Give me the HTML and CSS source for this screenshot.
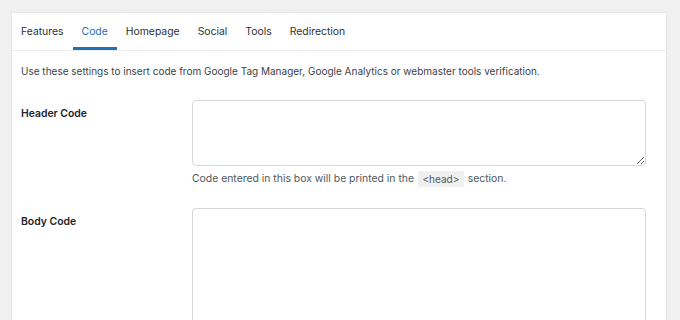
FILE: index.html
```html
<!DOCTYPE html>
<html>
<head>
<meta charset="utf-8">
<link rel="stylesheet" href="styles.css">
</head>
<body>
<div class="card">
  <nav class="tabs">
    <a class="tab">Features</a>
    <a class="tab active">Code</a>
    <a class="tab">Homepage</a>
    <a class="tab">Social</a>
    <a class="tab">Tools</a>
    <a class="tab">Redirection</a>
  </nav>
  <div class="content">
    <p class="intro">Use these settings to insert code from Google Tag Manager, Google Analytics or webmaster tools verification.</p>
    <div class="row">
      <label class="label">Header Code</label>
      <div class="field">
        <textarea class="code-box short"></textarea>
        <p class="help">Code entered in this box will be printed in the <code class="tag">&lt;head&gt;</code> section.</p>
      </div>
    </div>
    <div class="row">
      <label class="label">Body Code</label>
      <div class="field">
        <textarea class="code-box tall"></textarea>
      </div>
    </div>
  </div>
</div>
</body>
</html>
```

FILE: styles.css
```css
html, body {
  margin: 0;
  padding: 0;
  background: #f0f0f1;
  font-family: Inter, "Noto Sans", sans-serif;
  font-size: 10.4px;
  color: #1d2327;
  overflow: hidden;
}
.card {
  margin: 12px 0 0 11px;
  width: 654px;
  height: 400px;
  background: #fff;
  border: 1px solid #e6e6e8;
  border-bottom: none;
}
.tabs {
  display: flex;
  border-bottom: 1px solid #ececee;
}
.tab {
  padding: 12px 9px 9px;
  line-height: 13px;
  border-bottom: 3px solid transparent;
  color: #2c3338;
}
.tab.active {
  color: #2271b1;
  border-bottom-color: #2271b1;
}
.content {
  padding: 14px 21px 0 9px;
}
.intro {
  margin: 0 0 22px;
  font-size: 10px;
  line-height: 13px;
  color: #3c434a;
}
.row {
  display: grid;
  grid-template-columns: 171px 1fr;
}
.label {
  font-weight: 600;
  padding-top: 6.5px;
  line-height: 13px;
  color: #1d2327;
}
.code-box {
  display: block;
  box-sizing: border-box;
  width: 454px;
  margin: 0;
  border: 1px solid #d8d8da;
  border-radius: 4px;
  background: #fff;
  font: inherit;
}
.short { height: 66px; }
.tall { height: 140px; }
.help {
  margin: 5px 0 21px;
  line-height: 16px;
  color: #50575e;
}
.tag {
  display: inline-block;
  font-family: Inter, "Noto Sans", sans-serif;
  font-size: 10px;
  line-height: 16px;
  background: #f0f0f1;
  padding: 0 4.5px;
  margin: 0 1px;
  vertical-align: top;
}
```
